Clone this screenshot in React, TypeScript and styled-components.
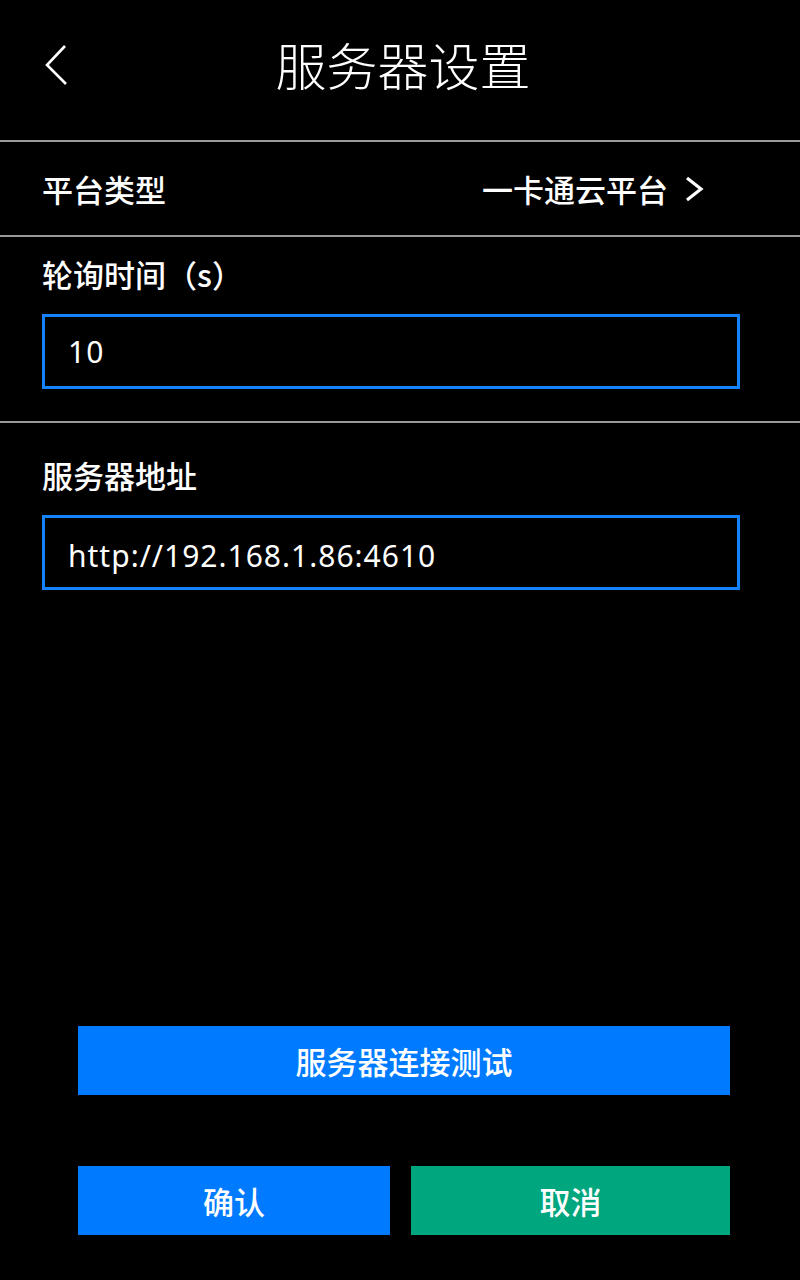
import React from "react";
import styled, { createGlobalStyle } from "styled-components";

const GlobalStyle = createGlobalStyle`
  html, body {
    margin: 0;
    padding: 0;
    background: #000;
  }
  body {
    font-family: "Noto Sans", "Noto Sans CJK SC", sans-serif;
    color: #fff;
  }
`;

const Screen = styled.div`
  width: 800px;
  height: 1280px;
  background: #000;
  display: flex;
  flex-direction: column;
`;

const Header = styled.div`
  height: 140px;
  border-bottom: 2px solid #9a9a9a;
  display: flex;
  align-items: center;
  justify-content: center;
  position: relative;
`;

const BackButton = styled.button`
  position: absolute;
  left: 40px;
  top: 40px;
  width: 34px;
  height: 50px;
  padding: 0;
  border: none;
  background: transparent;
  display: flex;
  align-items: center;
  justify-content: center;
`;

const Title = styled.h1`
  margin: -12px 0 0 6px;
  font-family: "Noto Sans CJK SC", sans-serif;
  font-weight: 300;
  font-size: 51px;
  color: #fff;
`;

const SelectRow = styled.div`
  height: 93px;
  border-bottom: 2px solid #9a9a9a;
  padding: 0 96px 0 42px;
  display: flex;
  align-items: center;
  justify-content: space-between;
`;

const Label = styled.span`
  font-family: "Noto Sans CJK SC", sans-serif;
  font-size: 31px;
  font-weight: 500;
  color: #fff;
`;

const Value = styled.span`
  display: flex;
  align-items: center;
  gap: 16px;
  font-family: "Noto Sans CJK SC", sans-serif;
  font-size: 31px;
  font-weight: 500;
`;

const Field = styled.div<{ $divider?: boolean; $top: number }>`
  padding: ${(p) => p.$top}px 60px 32px 42px;
  display: flex;
  flex-direction: column;
  gap: 18px;
  border-bottom: ${(p) => (p.$divider ? "2px solid #9a9a9a" : "none")};
`;

const FieldLabel = styled(Label)`
  line-height: 44px;
`;

const Input = styled.input<{ $shift?: number }>`
  box-sizing: border-box;
  width: 698px;
  height: 75px;
  border: 3px solid #1482fa;
  background: #000;
  color: #fff;
  padding: ${(p) => p.$shift ?? 0}px 23px 0;
  font-family: "Noto Sans", "Open Sans", sans-serif;
  font-size: 30px;
  letter-spacing: 1px;
  outline: none;
`;

const Spacer = styled.div`
  flex: 1;
`;

const Actions = styled.div`
  padding: 0 70px 45px 78px;
  display: flex;
  flex-direction: column;
  gap: 71px;
`;

const ButtonRow = styled.div`
  display: flex;
  gap: 21px;
`;

const ActionButton = styled.button<{ $tone: "blue" | "green"; $width: number }>`
  height: 69px;
  width: ${(p) => p.$width}px;
  border: none;
  background: ${(p) => (p.$tone === "blue" ? "#007bff" : "#00a67e")};
  color: #fff;
  font-family: "Noto Sans CJK SC", sans-serif;
  font-size: 31px;
  font-weight: 500;
  padding: 0;
`;

export default function App() {
  return (
    <>
      <GlobalStyle />
      <Screen>
        <Header>
          <BackButton aria-label="back">
            <svg width="34" height="50" viewBox="0 0 34 50">
              <path d="M25 6 L7 25 L26 44" fill="none" stroke="#fff" strokeWidth="2.6" />
            </svg>
          </BackButton>
          <Title>服务器设置</Title>
        </Header>

        <SelectRow>
          <Label>平台类型</Label>
          <Value>
            一卡通云平台
            <svg width="20" height="26" viewBox="0 0 20 26">
              <path d="M3 2 L17 13 L3 24" fill="none" stroke="#fff" strokeWidth="3.2" />
            </svg>
          </Value>
        </SelectRow>

        <Field $divider $top={15}>
          <FieldLabel>轮询时间（s）</FieldLabel>
          <Input defaultValue="10" />
        </Field>

        <Field $top={30}>
          <FieldLabel>服务器地址</FieldLabel>
          <Input defaultValue="http://192.168.1.86:4610" $shift={6} />
        </Field>

        <Spacer />

        <Actions>
          <ActionButton $tone="blue" $width={652}>服务器连接测试</ActionButton>
          <ButtonRow>
            <ActionButton $tone="blue" $width={312}>确认</ActionButton>
            <ActionButton $tone="green" $width={319}>取消</ActionButton>
          </ButtonRow>
        </Actions>
      </Screen>
    </>
  );
}
